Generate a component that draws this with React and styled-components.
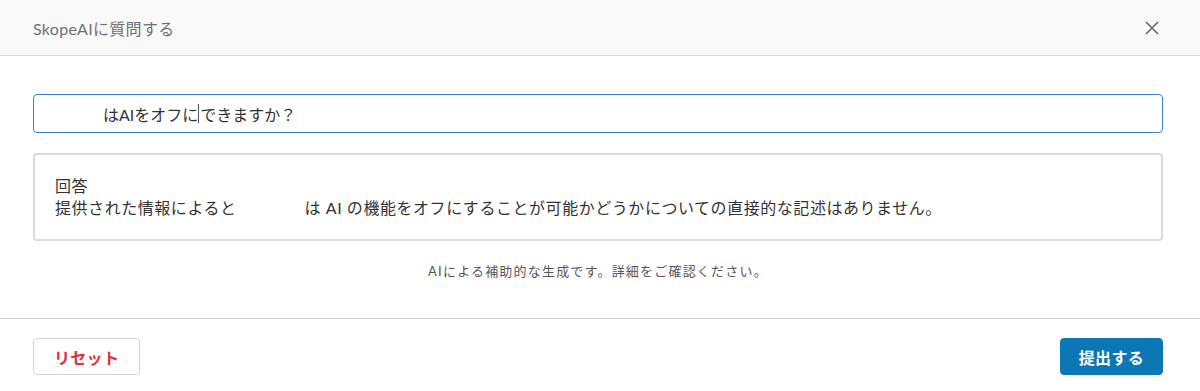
import React from 'react'
import styled, { createGlobalStyle } from 'styled-components'

const Global = createGlobalStyle`
  body {
    margin: 0;
    background: #fff;
    font-family: Lato, "Noto Sans CJK JP", sans-serif;
    color: #333;
  }
`

const Modal = styled.div`
  width: 1200px;
  height: 391px;
  display: flex;
  flex-direction: column;
  background: #fff;
`

const Header = styled.header`
  height: 56px;
  display: flex;
  align-items: center;
  justify-content: space-between;
  padding: 0 33px;
  background: #f9f9f9;
  border-bottom: 1px solid #dcdcdc;
  box-sizing: border-box;
`

const Title = styled.h2`
  margin: 0;
  font-size: 16px;
  font-weight: 400;
  letter-spacing: 0.3px;
  color: #707070;
`

const Close = styled.button`
  border: none;
  background: none;
  padding: 0;
  margin-right: 8px;
  display: flex;
  cursor: pointer;
`

const Body = styled.main`
  flex: 1;
  display: flex;
  flex-direction: column;
  padding: 38px 37px 0 33px;
  border-bottom: 1px solid #cfcfcf;
`

const Field = styled.div`
  height: 39px;
  display: flex;
  align-items: center;
  padding: 0 12px;
  border: 1px solid #3b7fc4;
  border-radius: 4px;
  font-size: 16px;
  color: #333;
  box-sizing: border-box;
  white-space: nowrap;
`

const Blank = styled.span`
  display: inline-block;
  width: ${p => p.w}px;
`

const Caret = styled.span`
  display: inline-block;
  width: 1px;
  height: 19px;
  background: #555;
  margin: 0 1px 0 0;
`

const Answer = styled.section`
  margin-top: 20px;
  height: 88px;
  padding: 20px 20px 0;
  border: 2px solid #dadada;
  border-radius: 4px;
  box-sizing: border-box;
  font-size: 16px;
  letter-spacing: 0.55px;
  line-height: 22px;
  color: #333;
`

const Line = styled.div`
  display: flex;
  white-space: nowrap;
`

const Note = styled.p`
  margin: 20px 0 0;
  text-align: center;
  font-size: 13px;
  letter-spacing: 1.2px;
  color: #555;
`

const Footer = styled.footer`
  height: 72px;
  display: flex;
  align-items: flex-start;
  justify-content: space-between;
  padding: 19px 37px 0 33px;
  box-sizing: border-box;
`

const Button = styled.button`
  height: 37px;
  padding: 0 ${p => (p.primary ? 18 : 20)}px;
  border-radius: 4px;
  font-family: inherit;
  font-size: 16px;
  font-weight: 700;
  letter-spacing: 0.3px;
  cursor: pointer;
  border: 1px solid ${p => (p.primary ? '#0b77b5' : '#d4d4d4')};
  background: ${p => (p.primary ? '#0b77b5' : '#fff')};
  color: ${p => (p.primary ? '#fff' : '#d9343c')};
`

const App = () => (
  <Modal>
    <Global />
    <Header>
      <Title>SkopeAIに質問する</Title>
      <Close aria-label="閉じる">
        <svg width="14" height="14" viewBox="0 0 14 14">
          <path d="M1 1L13 13M13 1L1 13" stroke="#666" strokeWidth="1.5" />
        </svg>
      </Close>
    </Header>
    <Body>
      <Field>
        <Blank w={57} />
        はAIをオフに<Caret />できますか？
      </Field>
      <Answer>
        <Line>回答</Line>
        <Line>
          提供された情報によると<Blank w={68} />
          は AI の機能をオフにすることが可能かどうかについての直接的な記述はありません。
        </Line>
      </Answer>
      <Note>AIによる補助的な生成です。詳細をご確認ください。</Note>
    </Body>
    <Footer>
      <Button>リセット</Button>
      <Button primary>提出する</Button>
    </Footer>
  </Modal>
)

export default App
